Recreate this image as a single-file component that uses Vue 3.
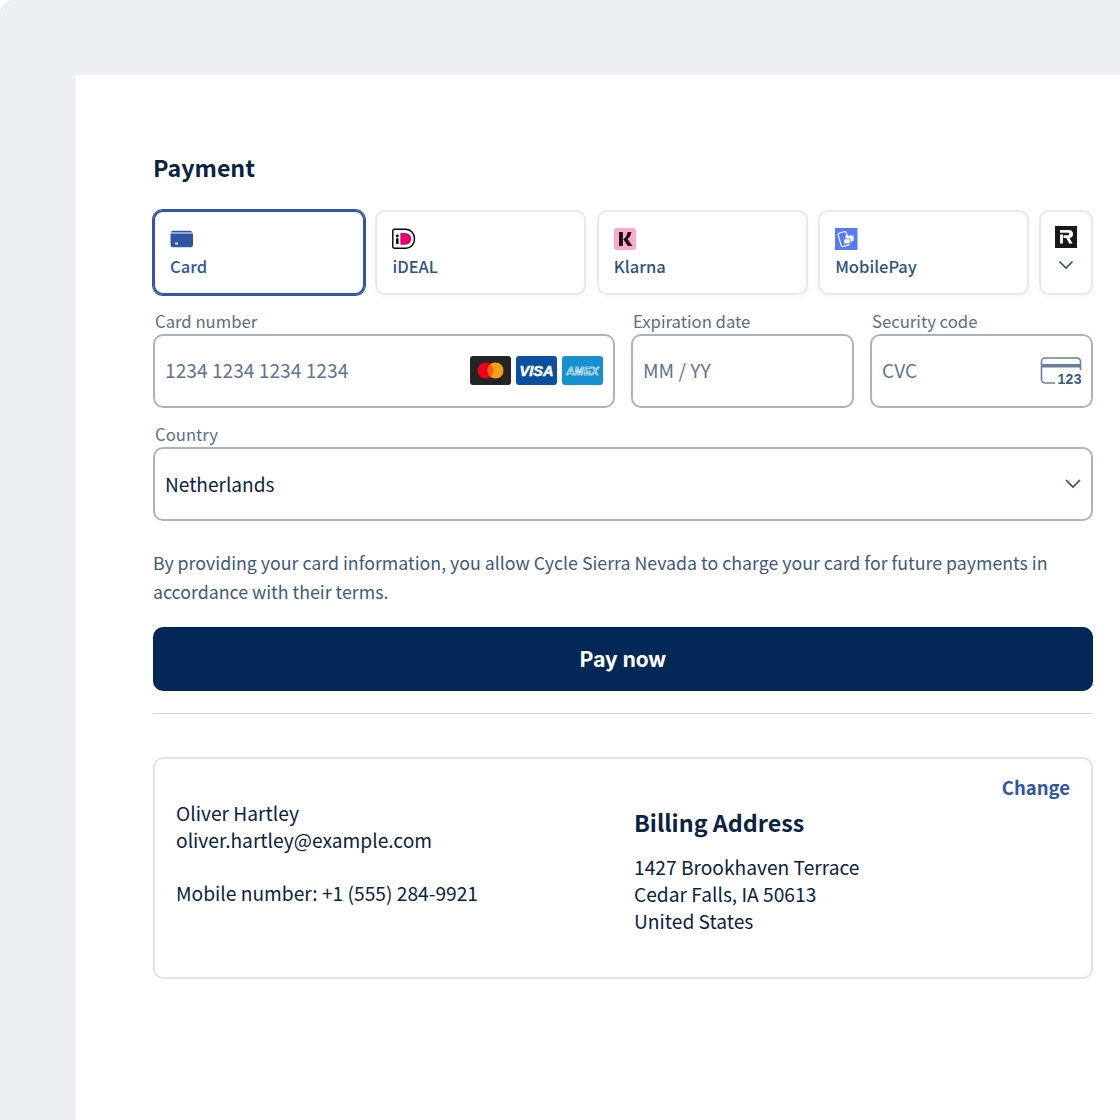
<script setup>
const methods = [
  { name: 'Card', icon: 'card', active: true },
  { name: 'iDEAL', icon: 'ideal' },
  { name: 'Klarna', icon: 'klarna' },
  { name: 'MobilePay', icon: 'mobilepay' }
]
</script>

<template>
  <div class="page">
    <main class="sheet">
      <h1 class="title">Payment</h1>

      <div class="tabs">
        <div v-for="m in methods" :key="m.name" class="tab" :class="{ active: m.active }">
          <svg v-if="m.icon === 'card'" class="tab-icon" width="24" height="22" viewBox="0 0 24 22">
            <path d="M3 2.700h17a2.500 2.500 0 0 1 2.300 1.900H.7A2.500 2.500 0 0 1 3 2.700z" fill="#2e55a6" />
            <path d="M.5 5.600h22.500v11.200a2.500 2.500 0 0 1-2.500 2.500H3a2.500 2.500 0 0 1-2.500-2.500z" fill="#2e55a6" />
            <rect x="5" y="14.500" width="3" height="2" rx="1" fill="#fff" />
          </svg>
          <svg v-else-if="m.icon === 'ideal'" class="tab-icon" width="24" height="22" viewBox="0 0 24 22">
            <path d="M2.500 1.300h11.500a8.500 9.500 0 0 1 0 19H2.500a1.700 1.700 0 0 1-1.700-1.700V3a1.700 1.700 0 0 1 1.700-1.700z" fill="#fff" stroke="#000" stroke-width="1.400" />
            <circle cx="5.300" cy="8" r="1.400" fill="#000" />
            <rect x="4.100" y="10.300" width="2.400" height="5.800" fill="#000" />
            <path d="M8.400 4.900h5a5.900 5.900 0 0 1 0 11.800h-5z" fill="#e5006f" />
          </svg>
          <svg v-else-if="m.icon === 'klarna'" class="tab-icon" width="24" height="22" viewBox="0 0 24 22">
            <rect x="0" y="0" width="22" height="22" rx="2.500" fill="#ffa8cd" />
            <path d="M5 4h3.900v14H5zM13.500 4h3.900c-.4 3.100-1.800 5.500-3.800 7.100l4.800 6.900h-4.500l-4.600-6.700c2.300-1.500 3.900-3.900 4.200-7.300z" fill="#17120f" />
          </svg>
          <svg v-else class="tab-icon" width="24" height="22" viewBox="0 0 24 22">
            <rect width="22.500" height="22.500" fill="#5a78ff" />
            <rect x="4.500" y="4" width="8.500" height="14" rx="2" transform="rotate(-16 9 11)" fill="none" stroke="#fff" stroke-width="1.200" />
            <path d="M10.500 7.500h8v5.500h-1.500v2l-2-2h-4.500z" fill="#fff" />
            <path d="M8.500 10.500h7v5.500h-4.500l-2 1.500z" fill="#5a78ff" />
            <path d="M9.300 11.300h5.400v3.900h-4l-1.400 1z" fill="#fff" />
          </svg>
          <span class="tab-name">{{ m.name }}</span>
        </div>

        <div class="tab more">
          <svg width="22" height="22" viewBox="0 0 22 22">
            <rect width="22" height="22" fill="#191919" />
            <path d="M5 4h8.500a4 4 0 0 1 1 8l3 5.500h-3.300l-3-5.500H8.500V9.200h4.700a1.300 1.300 0 0 0 0-2.500H5zM5 8.500h2.900v9H5z" fill="#fff" />
          </svg>
          <svg class="more-chev" width="16" height="10" viewBox="0 0 16 10">
            <path d="M1.500 1.500 8 8l6.500-6.500" fill="none" stroke="#30547f" stroke-width="1.600" />
          </svg>
        </div>
      </div>

      <div class="row-fields">
        <label class="field card-field">
          <span class="label">Card number</span>
          <div class="input">
            <span class="placeholder">1234 1234 1234 1234</span>
            <div class="brands">
              <svg width="41" height="29" viewBox="0 0 41 29">
                <rect width="41" height="29" rx="3" fill="#252525" />
                <circle cx="15.500" cy="14.500" r="8" fill="#eb001b" />
                <circle cx="25.500" cy="14.500" r="8" fill="#f79e1b" />
                <path d="M20.500 8.300a8 8 0 0 1 0 12.400 8 8 0 0 1 0-12.400z" fill="#ff5f00" />
              </svg>
              <div class="brand visa">VISA</div>
              <div class="brand amex">AMEX</div>
            </div>
          </div>
        </label>
        <label class="field">
          <span class="label">Expiration date</span>
          <div class="input">
            <span class="placeholder">MM / YY</span>
          </div>
        </label>
        <label class="field">
          <span class="label">Security code</span>
          <div class="input">
            <span class="placeholder">CVC</span>
            <div class="cvc-icon">
              <svg width="42" height="29" viewBox="0 0 42 29">
                <path d="M15 27H5a3.500 3.500 0 0 1-3.500-3.500v-18A3.500 3.500 0 0 1 5 2h32a3.500 3.500 0 0 1 3.500 3.500V14" fill="none" stroke="#6b7f9b" stroke-width="1.600" />
                <rect x="1.500" y="8" width="39" height="3.500" fill="#6b7f9b" />
              </svg>
              <span class="cvc-num">123</span>
            </div>
          </div>
        </label>
      </div>

      <label class="field country">
        <span class="label">Country</span>
        <div class="input">
          <span class="value">Netherlands</span>
          <svg class="select-chev" width="18" height="11" viewBox="0 0 18 11">
            <path d="M2 2l7 7 7-7" fill="none" stroke="#30547f" stroke-width="1.700" />
          </svg>
        </div>
      </label>

      <p class="terms">
        By providing your card information, you allow Cycle Sierra Nevada to charge your card for future payments in accordance with their terms.
      </p>

      <button class="pay">Pay now</button>

      <hr class="divider" />

      <section class="summary">
        <a class="change">Change</a>
        <div class="contact">
          <div>Oliver Hartley</div>
          <div>oliver.hartley@example.com</div>
          <div class="mobile">Mobile number: +1 (555) 284-9921</div>
        </div>
        <div class="billing">
          <h2>Billing Address</h2>
          <div>1427 Brookhaven Terrace</div>
          <div>Cedar Falls, IA 50613</div>
          <div>United States</div>
        </div>
      </section>
    </main>
  </div>
</template>

<style>
html, body {
  background: #fff;
}
</style>

<style scoped>
.page {
  width: 1120px;
  height: 1120px;
  box-sizing: border-box;
  padding: 75px 0 0 75px;
  background: #edf0f3;
  border-radius: 14px 0 0 0;
  overflow: hidden;
  font-family: "Noto Sans CJK JP", "Noto Sans", sans-serif;
  color: #0a2540;
}
.sheet {
  height: 100%;
  box-sizing: border-box;
  padding: 76px 27px 0 78px;
  background: #fff;
  border-radius: 4px 0 0 0;
}
.title {
  margin: 0;
  font-size: 23.200px;
  line-height: 32px;
  font-weight: 700;
  color: #0a2343;
}
.tabs {
  display: grid;
  grid-template-columns: 212px 211px 211px 210.500px 54px;
  gap: 10.400px;
  margin-top: 27px;
}
.tab {
  height: 85px;
  box-sizing: border-box;
  padding: 16px 15px 0;
  border: 2px solid #e7e9ec;
  border-radius: 10px;
  box-shadow: 0 2px 4px rgba(20, 40, 70, 0.04);
  display: flex;
  flex-direction: column;
  color: #30547f;
}
.tab.active {
  border-color: #2e55a6;
  box-shadow: 0 0 0 1px #2e55a6;
  color: #2e55a6;
}
.tab-icon {
  display: block;
}
.tab-name {
  margin-top: 4px;
  font-size: 16.500px;
  line-height: 25px;
  font-weight: 500;
}
.tab.more {
  padding: 14px 0 0;
  align-items: center;
}
.more-chev {
  margin-top: 12px;
}
.row-fields {
  display: grid;
  grid-template-columns: 462px 223px 223px;
  gap: 16px;
  margin-top: 15px;
}
.field {
  display: block;
}
.label {
  display: block;
  padding: 0 0 2px 2px;
  font-size: 16.700px;
  line-height: 22px;
  color: #5a6e85;
}
.input {
  height: 74px;
  box-sizing: border-box;
  padding: 0 11px 1px 10px;
  border: 2px solid #aeb3ba;
  border-radius: 10px;
  display: flex;
  align-items: center;
  justify-content: space-between;
}
.placeholder {
  margin-bottom: 2px;
  font-size: 19.200px;
  color: #5f7590;
}
.value {
  font-size: 19.100px;
  color: #0a2540;
}
.select-chev {
  margin-right: -2px;
}
.brands {
  display: flex;
  gap: 5px;
  transform: translateX(1px);
}
.brand {
  width: 41px;
  height: 29px;
  border-radius: 3px;
  display: flex;
  align-items: center;
  justify-content: center;
  color: #fff;
  font-family: "Liberation Sans", sans-serif;
  font-weight: 700;
}
.visa {
  background: #0b4f9e;
  font-size: 14.500px;
  font-style: italic;
  -webkit-text-stroke: 0.5px #fff;
}
.amex {
  background: #1690cf;
  font-size: 11px;
  font-style: italic;
  letter-spacing: 0.2px;
  color: #1690cf;
  -webkit-text-stroke: 0.6px #fff;
}
.cvc-icon {
  position: relative;
  width: 42px;
  height: 29px;
  margin-right: -2px;
}
.cvc-icon svg {
  display: block;
}
.cvc-num {
  position: absolute;
  right: 0;
  bottom: -2px;
  padding-left: 2px;
  background: #fff;
  font-family: "Liberation Sans", sans-serif;
  font-size: 14px;
  line-height: 16px;
  font-weight: 700;
  letter-spacing: 0.4px;
  color: #3d5a80;
}
.country {
  margin-top: 15px;
}
.terms {
  margin: 27px 0 0;
  font-size: 17.760px;
  line-height: 29px;
  color: #3e5a7c;
}
.pay {
  display: block;
  width: 100%;
  height: 64px;
  margin-top: 21px;
  border: 0;
  border-radius: 10px;
  background: #022858;
  color: #fff;
  font-family: Inter, sans-serif;
  font-size: 21px;
  font-weight: 700;
}
.divider {
  margin: 22px 0 0;
  border: 0;
  border-top: 1px solid #d4d7da;
}
.summary {
  position: relative;
  display: grid;
  grid-template-columns: 458px 1fr;
  height: 222px;
  margin-top: 43px;
  box-sizing: border-box;
  padding: 41px 21px 0;
  border: 2px solid #e1e3e6;
  border-radius: 10px;
  font-size: 19.200px;
  line-height: 27px;
  color: #0a2343;
}
.change {
  position: absolute;
  top: 15px;
  right: 21px;
  font-size: 18.500px;
  font-weight: 700;
  color: #2e55a6;
}
.mobile {
  margin-top: 26px;
}
.billing h2 {
  margin: 4px 0 14px;
  font-size: 23.300px;
  line-height: 36px;
  font-weight: 700;
}
</style>
